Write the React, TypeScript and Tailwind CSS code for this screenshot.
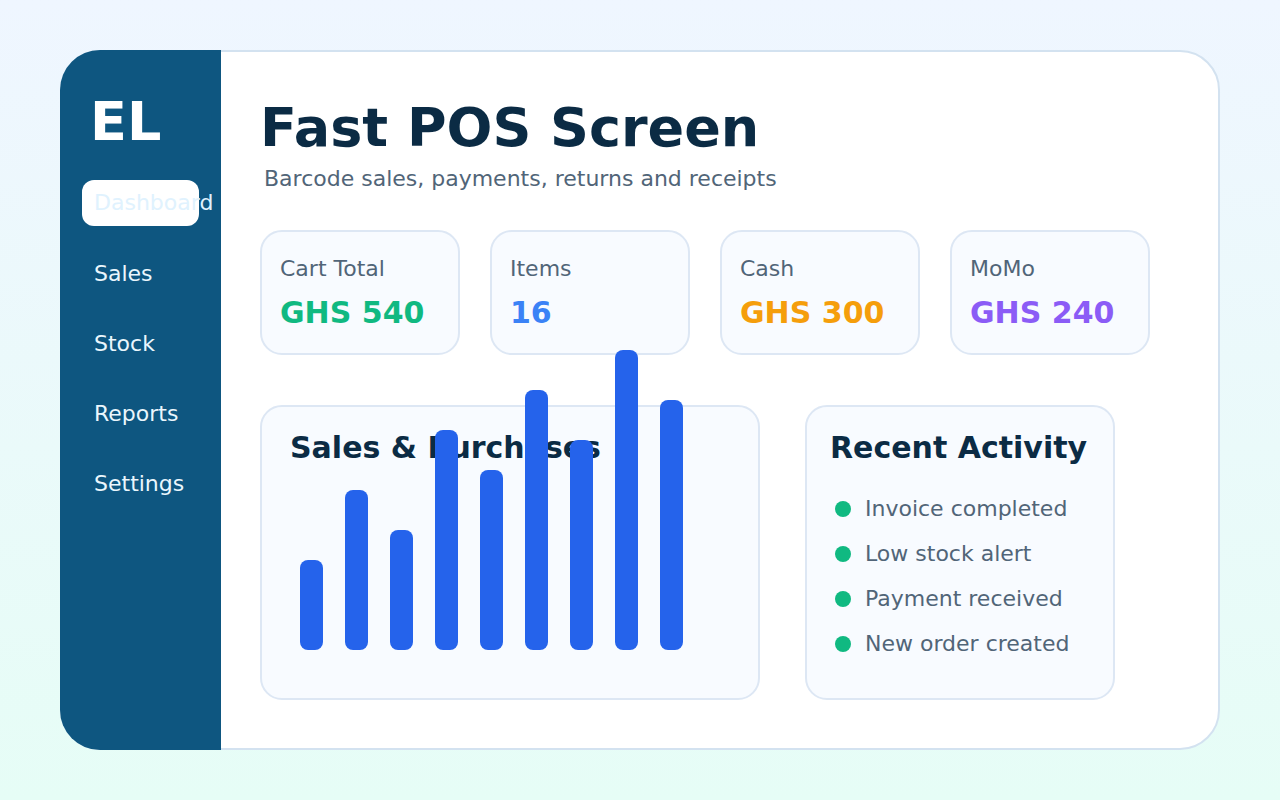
import React from 'react';

const navItems = ['Sales', 'Stock', 'Reports', 'Settings'];

const stats = [
  { label: 'Cart Total', value: 'GHS 540', color: 'text-[#10b981]' },
  { label: 'Items', value: '16', color: 'text-[#3b82f6]' },
  { label: 'Cash', value: 'GHS 300', color: 'text-[#f59e0b]' },
  { label: 'MoMo', value: 'GHS 240', color: 'text-[#8b5cf6]' },
];

const bars = [90, 160, 120, 220, 180, 260, 210, 300, 250];

const activity = ['Invoice completed', 'Low stock alert', 'Payment received', 'New order created'];

export default function App() {
  return (
    <div className="h-[800px] w-full bg-linear-to-b from-[#eff6ff] to-[#e6fdf6] pt-[50px] pl-[60px] font-['DejaVu_Sans',sans-serif]">
      <div className="flex h-[700px] w-[1160px] rounded-[40px] border-2 border-[#d3e2f0] bg-white">
        {/* sidebar */}
        <aside className="-my-[2px] -ml-[2px] flex w-[161px] shrink-0 flex-col rounded-l-[40px] bg-[#0e5680] pt-[45px]">
          <div className="pl-[30px] text-[54px] font-bold leading-[54px] text-white">EL</div>
          <div className="mt-[31px] ml-[22px] flex h-[46px] w-[117px] items-center rounded-[12px] bg-white pl-[12px]">
            <span className="whitespace-nowrap text-[22px] leading-[22px] text-[#e0f2fe]">Dashboard</span>
          </div>
          <nav className="flex flex-col gap-[24px] pt-[25px]">
            {navItems.map(item => (
              <div key={item} className="ml-[22px] flex h-[46px] items-center pl-[12px]">
                <span className="text-[22px] leading-[22px] text-[#eaf6fd]">{item}</span>
              </div>
            ))}
          </nav>
        </aside>

        {/* main */}
        <main className="flex flex-1 flex-col pt-[49px] pl-[39px]">
          <h1 className="text-[54px] font-bold leading-[54px] text-[#0b2b44]">Fast POS Screen</h1>
          <p className="mt-[13px] ml-[4px] text-[22px] leading-[22px] text-[#516578]">
            Barcode sales, payments, returns and receipts
          </p>

          {/* stat cards */}
          <div className="mt-[40px] flex gap-[30px]">
            {stats.map(s => (
              <div
                key={s.label}
                className="h-[125px] w-[200px] rounded-[22px] border-2 border-[#dde7f4] bg-[#f8fbff] px-[18px] pt-[26px]"
              >
                <div className="text-[22px] leading-[22px] text-[#516578]">{s.label}</div>
                <div className={`mt-[18px] text-[30px] font-bold leading-[30px] ${s.color}`}>{s.value}</div>
              </div>
            ))}
          </div>

          <div className="mt-[50px] flex gap-[45px]">
            {/* chart */}
            <div className="flex h-[295px] w-[500px] flex-col justify-between rounded-[22px] border-2 border-[#dde7f4] bg-[#f8fbff] pt-[26px] pb-[48px] pl-[28px]">
              <h2 className="text-[30px] font-bold leading-[30px] text-[#0b2b44]">Sales &amp; Purchases</h2>
              <div className="flex h-0 items-end gap-[22px] pl-[10px]">
                {bars.map((h, i) => (
                  <div key={i} className="w-[23px] shrink-0 rounded-[8px] bg-[#2563eb]" style={{ height: h }} />
                ))}
              </div>
            </div>

            {/* recent activity */}
            <div className="h-[295px] w-[310px] rounded-[22px] border-2 border-[#dde7f4] bg-[#f8fbff] pt-[26px] pl-[23px]">
              <h2 className="text-[30px] font-bold leading-[30px] text-[#0b2b44]">Recent Activity</h2>
              <ul className="mt-[35px] flex flex-col gap-[23px] pl-[5px]">
                {activity.map(a => (
                  <li key={a} className="flex h-[22px] items-center">
                    <span className="h-[16px] w-[16px] shrink-0 rounded-full bg-[#10b981]" />
                    <span className="ml-[14px] text-[22px] leading-[22px] text-[#516578]">{a}</span>
                  </li>
                ))}
              </ul>
            </div>
          </div>
        </main>
      </div>
    </div>
  );
}
